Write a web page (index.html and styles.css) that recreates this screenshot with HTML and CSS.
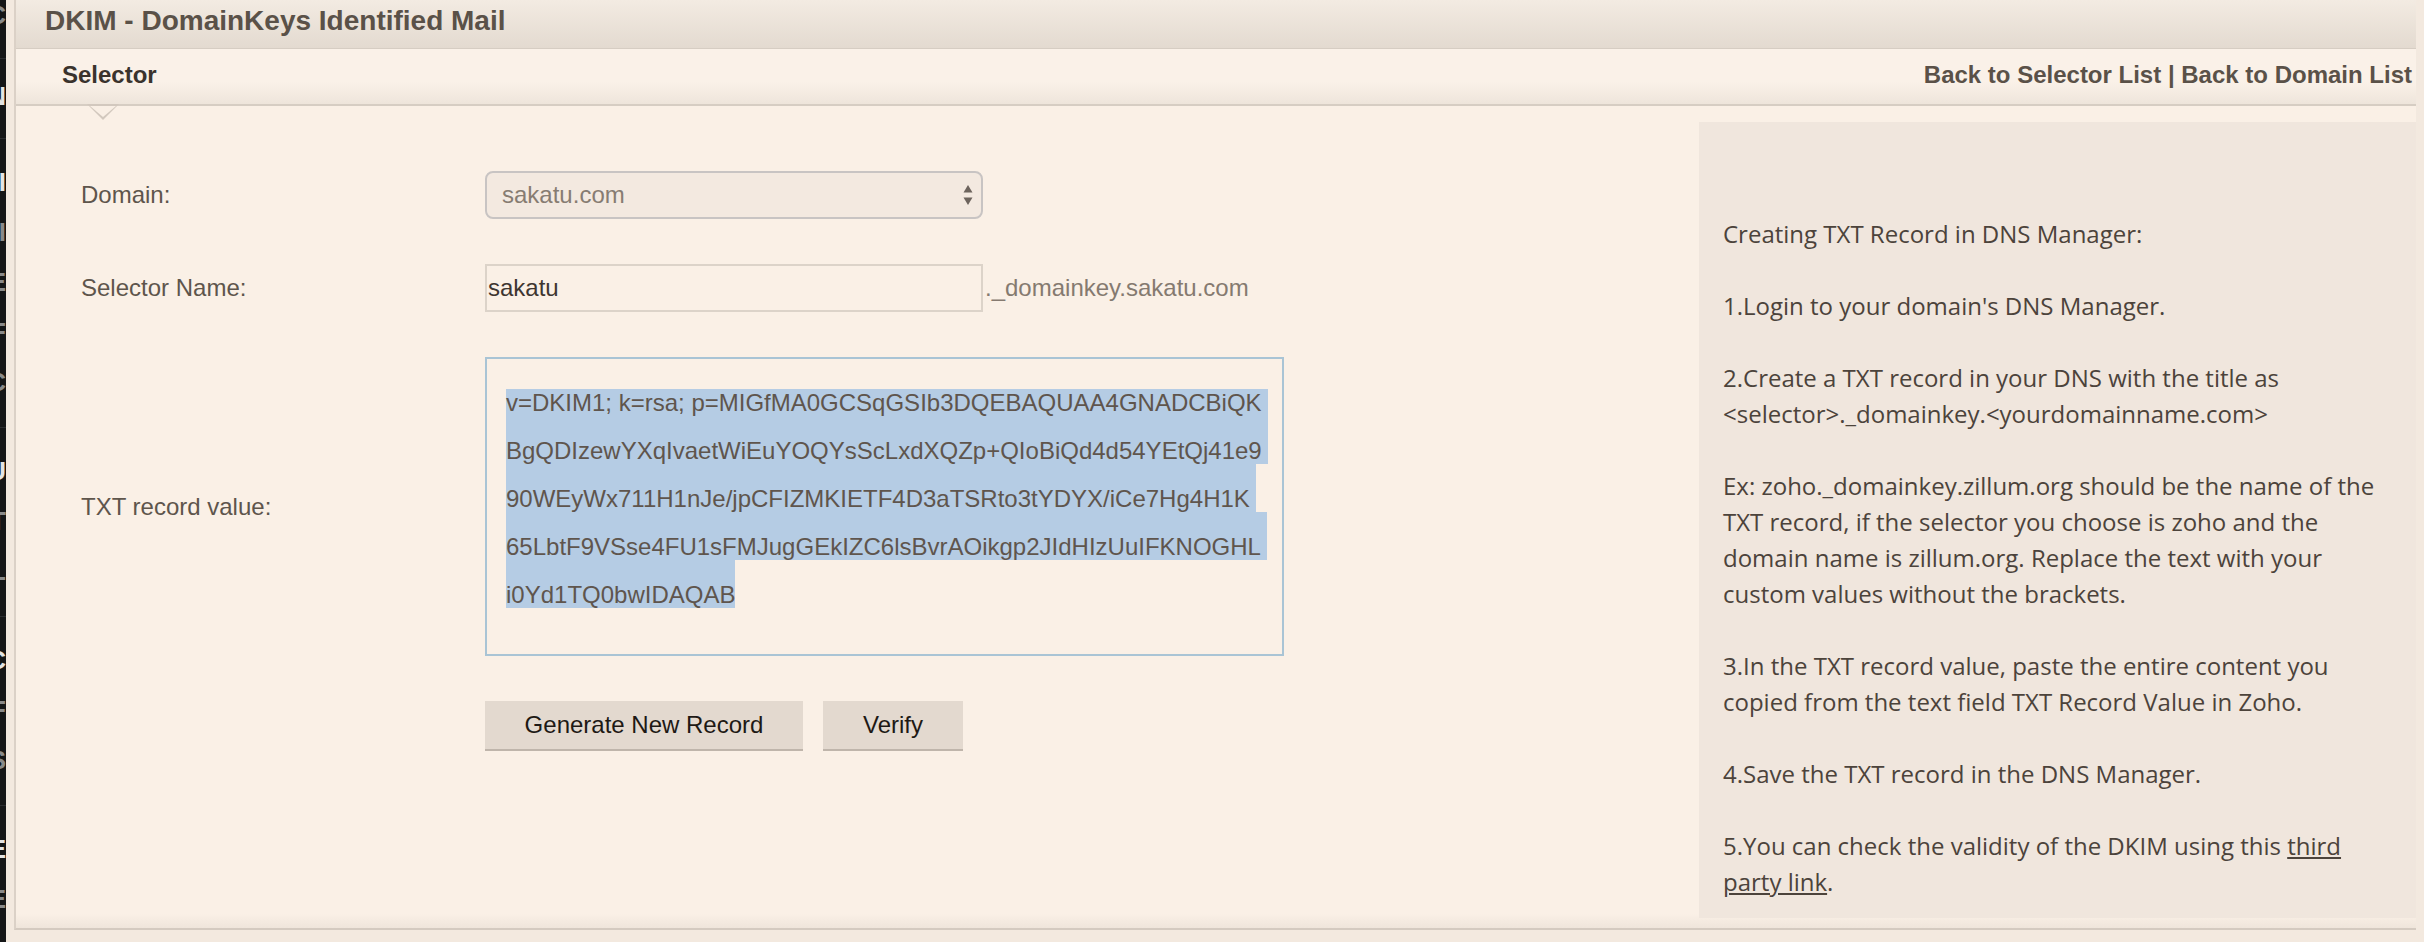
FILE: index.html
```html
<!DOCTYPE html>
<html lang="en">
<head>
<meta charset="utf-8">
<title>DKIM - DomainKeys Identified Mail</title>
<link rel="stylesheet" href="styles.css">
</head>
<body>
<div class="app">
  <nav class="sidebar">
    <div class="sb-group g1"><div class="sb-item">C</div></div>
    <div class="sb-group g2"><div class="sb-item on">N</div></div>
    <div class="sb-group">
      <div class="sb-item on">I</div>
      <div class="sb-item">I</div>
      <div class="sb-item">E</div>
      <div class="sb-item">F</div>
      <div class="sb-item">C</div>
    </div>
    <div class="sb-group">
      <div class="sb-item on">U</div>
      <div class="sb-item">T</div>
      <div class="sb-item">L</div>
    </div>
    <div class="sb-group">
      <div class="sb-item on">C</div>
      <div class="sb-item">F</div>
      <div class="sb-item">S</div>
    </div>
    <div class="sb-group last">
      <div class="sb-item on">E</div>
      <div class="sb-item">E</div>
    </div>
  </nav>
  <div class="frame">
    <div class="panel">
      <header class="titlebar"><h1>DKIM - DomainKeys Identified Mail</h1></header>
      <div class="tabbar">
        <span class="tab">Selector</span>
        <span class="links"><a class="link">Back to Selector List</a> | <a class="link">Back to Domain List</a></span>
        <span class="pointer-outer"></span>
        <span class="pointer-inner"></span>
      </div>
      <div class="content">
        <form class="form">
          <label class="label">Domain:</label>
          <div class="select">
            <span>sakatu.com</span>
            <svg class="arrows" width="10" height="22" viewBox="0 0 10 22"><path d="M5 1 L9.5 8.5 L0.5 8.5 Z" fill="#6d645d"/><path d="M5 21 L9.5 13.5 L0.5 13.5 Z" fill="#6d645d"/></svg>
          </div>
          <label class="label">Selector Name:</label>
          <div class="namefield">
            <span class="input">sakatu</span><span class="suffix">._domainkey.sakatu.com</span>
          </div>
          <label class="label">TXT record value:</label>
          <div class="textarea">
            <div class="line first"><span class="sel">v=DKIM1; k=rsa; p=MIGfMA0GCSqGSIb3DQEBAQUAA4GNADCBiQK</span></div>
            <div class="line"><span class="sel">BgQDIzewYXqIvaetWiEuYOQYsScLxdXQZp+QIoBiQd4d54YEtQj41e9</span></div>
            <div class="line"><span class="sel">90WEyWx711H1nJe/jpCFIZMKIETF4D3aTSRto3tYDYX/iCe7Hg4H1K</span></div>
            <div class="line"><span class="sel">65LbtF9VSse4FU1sFMJugGEkIZC6lsBvrAOikgp2JIdHIzUuIFKNOGHL</span></div>
            <div class="line last"><span class="sel">i0Yd1TQ0bwIDAQAB</span></div>
          </div>
          <span class="spacer"></span>
          <div class="buttons">
            <button type="button" class="btn btn-gen">Generate New Record</button>
            <button type="button" class="btn btn-verify">Verify</button>
          </div>
        </form>
        <aside class="help">
          <p>Creating TXT Record in DNS Manager:</p>
          <p>1.Login to your domain's DNS Manager.</p>
          <p>2.Create a TXT record in your DNS with the title as &lt;selector&gt;._domainkey.&lt;yourdomainname.com&gt;</p>
          <p>Ex: zoho._domainkey.zillum.org should be the name of the TXT record, if the selector you choose is zoho and the domain name is zillum.org. Replace the text with your custom values without the brackets.</p>
          <p>3.In the TXT record value, paste the entire content you copied from the text field TXT Record Value in Zoho.</p>
          <p>4.Save the TXT record in the DNS Manager.</p>
          <p>5.You can check the validity of the DKIM using this <a class="ext">third party link</a>.</p>
        </aside>
      </div>
    </div>
  </div>
</div>
</body>
</html>
```
FILE: styles.css
```css
html, body {
  margin: 0;
  padding: 0;
}
body {
  background: #f1e7dd;
  font-family: "Liberation Sans", Arial, sans-serif;
}
.app {
  display: flex;
  height: 942px;
  overflow: hidden;
}

/* dark app sidebar, mostly cut off */
.sidebar {
  width: 6px;
  flex: none;
  background: #151617;
  overflow: hidden;
}
.sb-group {
  border-bottom: 1px solid #2b2d2f;
  padding: 18px 0 20px;
}
.sb-group.g1 { padding: 0 0 28px; }
.sb-group.g1 .sb-item { line-height: 30px; }
.sb-group.g2 { padding: 12px 0 17px; }
.sb-group.last { border-bottom: 0; }
.sb-item {
  display: flex;
  justify-content: flex-end;
  line-height: 50px;
  font-size: 26px;
  font-weight: bold;
  color: #8a8a8a;
  white-space: nowrap;
}
.sb-item.on { color: #e4e4e4; }

.frame {
  flex: 1;
  display: flex;
  padding: 0 8px 12px 8px;
  background: #f3e9df;
}
.panel {
  flex: 1;
  display: flex;
  flex-direction: column;
  border-left: 2px solid #dbd1c7;
  border-bottom: 2px solid #d4cac0;
  background: linear-gradient(#faf0e6 calc(100% - 14px), #efe5db);
}

.titlebar {
  height: 48px;
  border-bottom: 1px solid #d6cdc3;
  background: linear-gradient(#f3ebe2, #e3dad0);
  padding-left: 29px;
}
.titlebar h1 {
  margin: 0;
  font-size: 28px;
  font-weight: bold;
  line-height: 41px;
  color: #5a5148;
}

.tabbar {
  position: relative;
  display: flex;
  justify-content: space-between;
  height: 52px;
  padding: 0 4px 3px 46px;
  border-bottom: 2px solid #d6cdc3;
  background: linear-gradient(#faf1e8 60%, #eee5db);
  font-size: 24px;
  font-weight: bold;
  line-height: 52px;
}
.tab { color: #3a332d; }
.links { color: #5a5148; }
.link { color: inherit; text-decoration: none; }
.pointer-outer {
  position: absolute;
  left: 71px;
  top: 100%;
  width: 0;
  height: 0;
  border-left: 16px solid transparent;
  border-right: 16px solid transparent;
  border-top: 16px solid #d2c8be;
}
.pointer-inner {
  position: absolute;
  left: 74px;
  top: calc(100% + 2px);
  width: 0;
  height: 0;
  border-left: 13px solid transparent;
  border-right: 13px solid transparent;
  border-top: 11px solid #f9efe5;
}

.content {
  flex: 1;
  display: flex;
}

.form {
  flex: 1;
  display: grid;
  grid-template-columns: 404px 1fr;
  row-gap: 45px;
  align-items: center;
  align-content: start;
  padding: 65px 0 0 65px;
}
.label {
  font-size: 24px;
  color: #5e554c;
}
.select {
  box-sizing: border-box;
  width: 498px;
  height: 48px;
  border: 2px solid #c8c4c3;
  border-radius: 8px;
  background: #f3e9e0;
  display: flex;
  align-items: center;
  justify-content: space-between;
  padding: 0 8px 0 15px;
  font-size: 24px;
  color: #877c72;
}
.arrows { display: block; }
.namefield {
  display: flex;
  align-items: center;
}
.input {
  box-sizing: border-box;
  width: 498px;
  height: 48px;
  border: 2px solid #dcd3c9;
  padding-left: 1px;
  line-height: 44px;
  font-size: 24px;
  color: #3e3631;
}
.suffix {
  margin-left: 2px;
  font-size: 24px;
  color: #857a70;
}
.textarea {
  box-sizing: border-box;
  width: 799px;
  height: 299px;
  border: 2px solid #a9c4d5;
  padding: 20px 19px;
  font-size: 24px;
  line-height: 48px;
  color: #5f554d;
  background: #faf0e6;
}
.line { white-space: nowrap; }
.sel {
  background: #b5cce4;
  padding: 21px 6px 0 0;
}
.line.first .sel { padding-top: 0; }
.line.last .sel { padding-right: 0; }

.buttons {
  display: flex;
  gap: 20px;
}
.btn {
  box-sizing: border-box;
  height: 50px;
  border: 0;
  border-bottom: 2px solid #bfb5ab;
  background: #e3d9cf;
  font-family: "Liberation Sans", Arial, sans-serif;
  font-size: 24px;
  color: #1e1915;
  padding: 0;
}
.btn-gen { width: 318px; }
.btn-verify { width: 140px; }

.help {
  flex: none;
  align-self: flex-start;
  box-sizing: border-box;
  width: 717px;
  height: 796px;
  margin-top: 16px;
  padding: 94px 28px 0 24px;
  background: #f0e6dd;
  font-family: "Open Sans", "Liberation Sans", sans-serif;
  font-size: 24px;
  line-height: 36px;
  color: #4c433b;
}
.help p { margin: 0 0 36px; }
.ext {
  color: inherit;
  text-decoration: underline;
}
```
